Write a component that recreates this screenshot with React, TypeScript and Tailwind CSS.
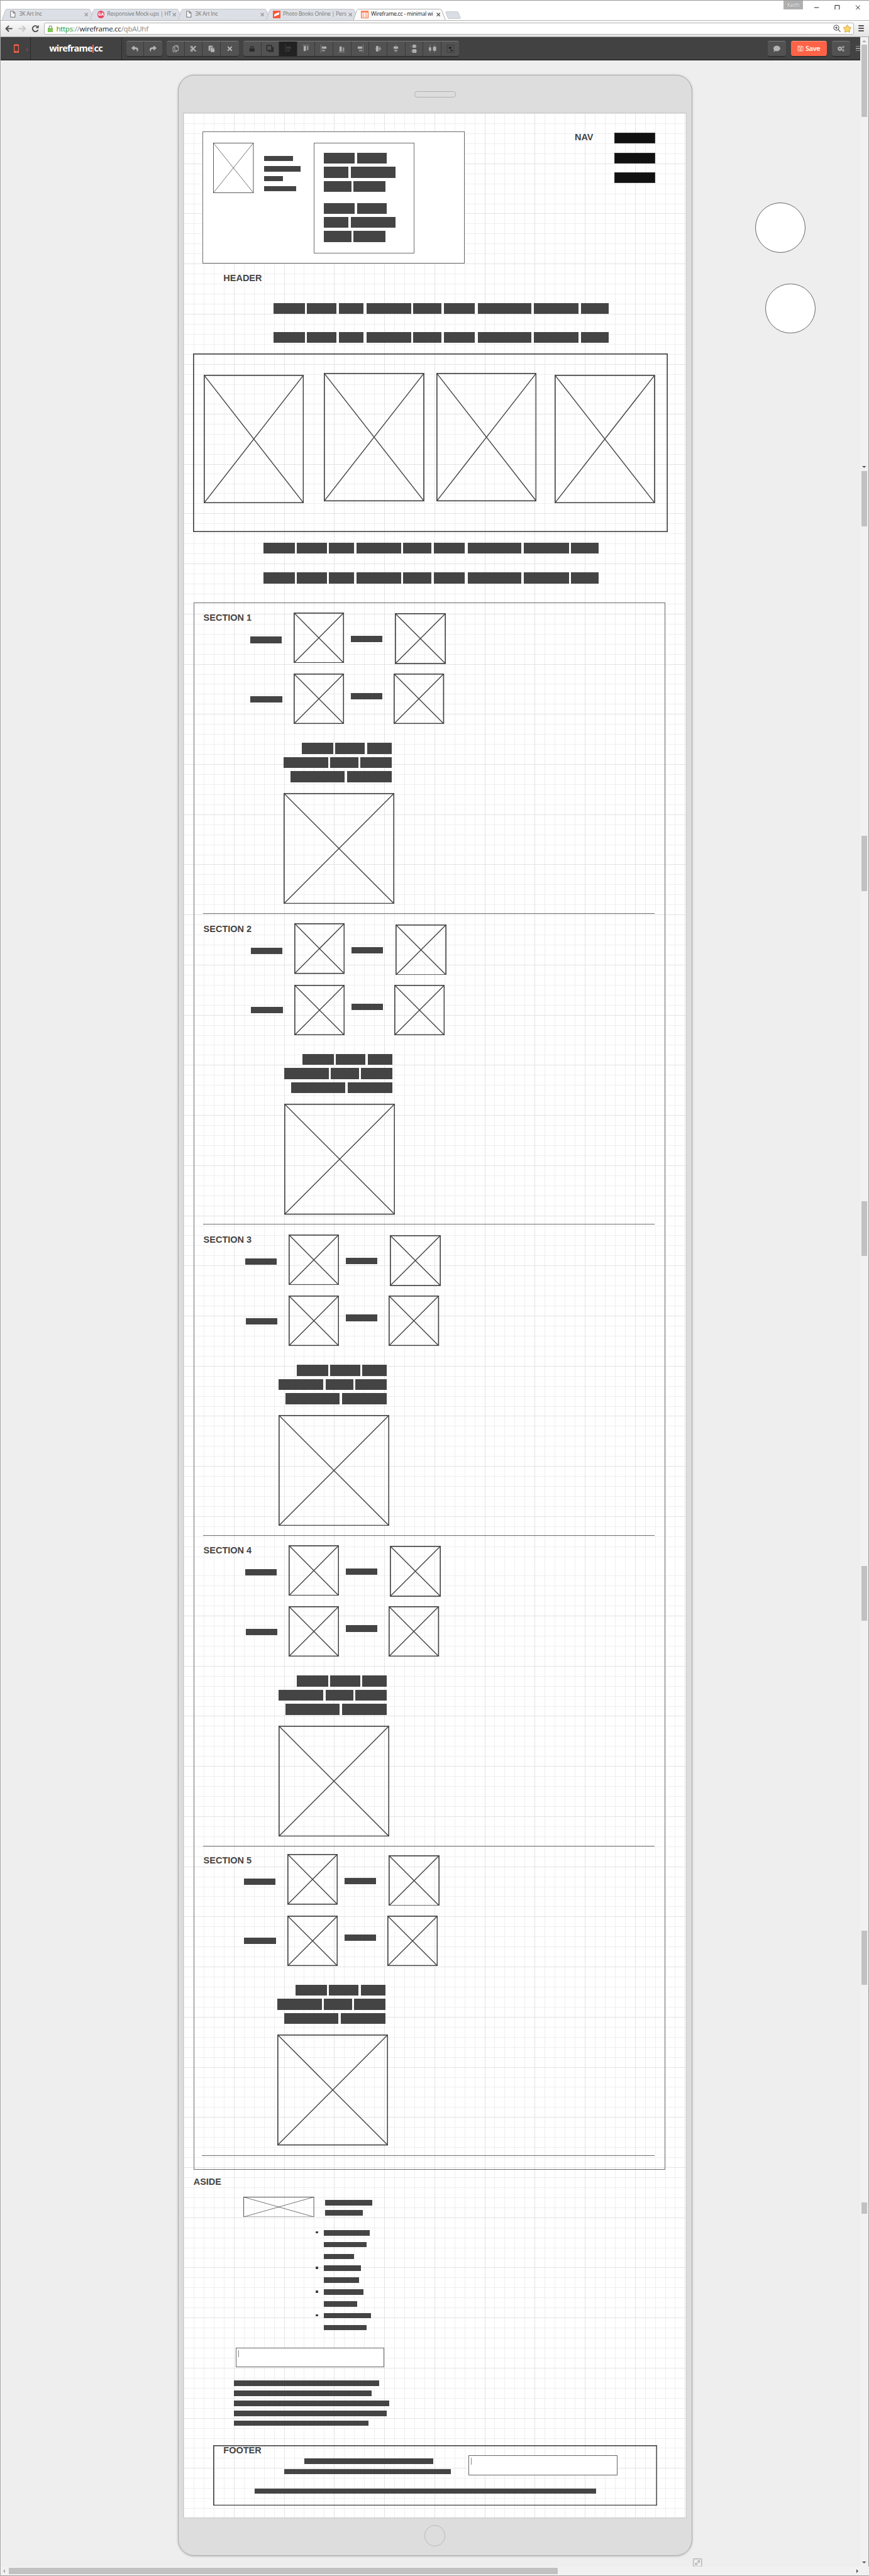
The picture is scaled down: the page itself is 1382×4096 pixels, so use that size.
import React from "react";
import {
  FaReply,
  FaShare,
  FaRegCopy,
  FaCut,
  FaPaste,
  FaTimes,
  FaLock,
  FaComment,
  FaRegSave,
  FaCogs,
  FaCaretRight,
  FaStar,
} from "react-icons/fa";

/* ---------- canvas primitives (left, top, right, bottom in page units) ---------- */

const CANVAS_TOP = 133;

type Rect = [number, number, number, number];

const place = ([l, t, r, b]: Rect) => ({
  left: l,
  top: t - CANVAS_TOP,
  width: r - l,
  height: b - t,
});

const Bar = ({ at }: { at: Rect }) => <div className="absolute bg-[#444]" style={place(at)} />;

const Frame = ({ at, fill }: { at: Rect; fill?: boolean }) => (
  <div className={`absolute border border-[#6c6c6c] ${fill ? "bg-white" : ""}`} style={place(at)} />
);

const HeavyFrame = ({ at }: { at: Rect }) => {
  const w = at[2] - at[0];
  const h = at[3] - at[1];
  return (
    <svg className="absolute" style={place(at)} viewBox={`0 0 ${w} ${h}`} fill="none" stroke="#444" strokeWidth="2.3">
      <rect x="1.15" y="1.15" width={w - 2.3} height={h - 2.3} />
    </svg>
  );
};

const ImageBox = ({ at, stroke = 2.3 }: { at: Rect; stroke?: number }) => {
  const w = at[2] - at[0];
  const h = at[3] - at[1];
  const s = stroke / 2;
  return (
    <svg className="absolute" style={place(at)} viewBox={`0 0 ${w} ${h}`} fill="none" stroke="#444">
      <rect x={s} y={s} width={w - stroke} height={h - stroke} strokeWidth={stroke} />
      <path d={`M${s} ${s}L${w - s} ${h - s}M${w - s} ${s}L${s} ${h - s}`} strokeWidth={stroke * 0.85} />
    </svg>
  );
};

const Label = ({ x, base, children }: { x: number; base: number; children: string }) => (
  <div
    className="absolute whitespace-nowrap font-['Liberation_Sans',Arial,sans-serif] text-[20px] leading-[20px] font-bold text-[#444]"
    style={{ left: x, top: base - 17.3 - CANVAS_TOP }}
  >
    {children}
  </div>
);

const Input = ({ at }: { at: Rect }) => (
  <div className="absolute border border-[#666] bg-white pt-[4px] pl-[5px]" style={place(at)}>
    <div className="h-[16px] w-[1.4px] bg-[#888]" />
  </div>
);

/* ---------- canvas content ---------- */

const paragraphWords: [number, number][] = [
  [599.7, 669.3],
  [673.7, 738.8],
  [744, 798],
  [803.9, 902.3],
  [906.7, 968.1],
  [974, 1042.1],
  [1048, 1165.7],
  [1170.8, 1270],
  [1275.2, 1335.8],
];

const WordRow = ({ dx, y, h }: { dx: number; y: number; h: number }) => (
  <>
    {paragraphWords.map(([a, b]) => (
      <Bar key={a} at={[a + dx, y, b + dx, y + h]} />
    ))}
  </>
);

const sectionImages: Rect[] = [
  [644.1, 1343.5, 754.7, 1454.7],
  [866.2, 1345.4, 978, 1457],
  [644.1, 1478, 754.7, 1588.7],
  [864.1, 1478, 974.8, 1588.7],
  [622, 1739.8, 865, 1983.2],
];

const sectionBars: Rect[] = [
  [549, 1396.8, 618, 1411],
  [769.8, 1395, 839.2, 1409.2],
  [549.8, 1527.2, 619.2, 1541],
  [769.8, 1519.9, 839.2, 1534],
  [662.1, 1630, 731, 1654],
  [736, 1630, 800.9, 1654],
  [806.2, 1630, 860, 1654],
  [622, 1660.8, 720, 1685.2],
  [725, 1660.8, 786.2, 1685.2],
  [791, 1660.8, 860, 1685.2],
  [638, 1692, 756, 1716],
  [762, 1692, 860, 1716],
];

const sections = [
  { name: "SECTION 1", dx: 0, dy: 0, base: 1361.9, line: 2004.3, lineX: 446 },
  { name: "SECTION 2", dx: 1, dy: 682.2, base: 2045.1, line: 2686.2, lineX: 446 },
  { name: "SECTION 3", dx: -11, dy: 1364.2, base: 2727.3, line: 3368.3, lineX: 446 },
  { name: "SECTION 4", dx: -11, dy: 2045.8, base: 3408.2, line: 4049.6, lineX: 446 },
  { name: "SECTION 5", dx: -14, dy: 2724.1, base: 4089.4, line: 4728.3, lineX: 443 },
];

const shift = (r: Rect, dx: number, dy: number): Rect => [r[0] + dx, r[1] + dy, r[2] + dx, r[3] + dy];

const headerBars: Rect[] = [
  [579.7, 342, 643.4, 353.9],
  [579.7, 364.2, 659.6, 376],
  [579.7, 386, 621.2, 397.8],
  [579.7, 408, 650, 420],
  ...[0, 110].flatMap((dy): Rect[] => [
    [710, 335 + dy, 778.8, 359 + dy],
    [784, 335 + dy, 849, 359 + dy],
    [710, 366.2 + dy, 764, 389.9 + dy],
    [769.9, 366.2 + dy, 868.3, 389.9 + dy],
    [710, 397 + dy, 771.4, 421 + dy],
    [775.8, 397 + dy, 845.3, 421 + dy],
  ]),
];

const asideList = [811.3, 803.9, 777.3, 791.3, 788.4, 797.2, 783.9, 814.3, 803.9];
const asideText = [832, 815.7, 854.2, 848.3, 808.3];
const bullets = [0, 3, 5, 7];

const Wireframe = () => (
  <>
    <Frame at={[444.4, 289, 1019.2, 577.7]} fill />
    <ImageBox at={[468, 313.2, 556.8, 423.5]} stroke={1.2} />
    <Frame at={[687.8, 313.2, 909, 555.6]} />
    {headerBars.map((r, i) => (
      <Bar key={i} at={r} />
    ))}

    <Label x={1261} base={308.8}>NAV</Label>
    {[290.6, 334.6, 378.4].map((y) => (
      <div key={y} className="absolute border border-[#333] bg-[#111]" style={place([1347.7, y, 1437.2, y + 23.5])} />
    ))}

    <Label x={490.2} base={616.8}>HEADER</Label>
    <WordRow dx={0} y={665.1} h={23.7} />
    <WordRow dx={0} y={728} h={24} />

    <HeavyFrame at={[423.6, 774.8, 1465.3, 1166.7]} />
    <ImageBox at={[447.3, 821.9, 667, 1103.6]} />
    <ImageBox at={[710.7, 818.8, 931.2, 1100.5]} />
    <ImageBox at={[957, 818.8, 1176.8, 1100.5]} />
    <ImageBox at={[1216.7, 821.9, 1437.2, 1103.6]} />

    <WordRow dx={-21.8} y={1190} h={24} />
    <WordRow dx={-21.8} y={1255.9} h={24} />

    <Frame at={[424.9, 1321.5, 1459.4, 4759.7]} />
    {sections.map((s) => (
      <React.Fragment key={s.name}>
        <Label x={446.5} base={s.base}>{s.name}</Label>
        {sectionImages.map((r, i) => (
          <ImageBox key={i} at={shift(r, s.dx, s.dy)} />
        ))}
        {sectionBars.map((r, i) => (
          <Bar key={i} at={shift(r, s.dx, s.dy)} />
        ))}
        <div className="absolute h-[1.4px] bg-[#6c6c6c]" style={{ left: s.lineX, top: s.line - 0.7 - CANVAS_TOP, width: 1436 - s.lineX }} />
      </React.Fragment>
    ))}

    <Label x={424.5} base={4793.2}>ASIDE</Label>
    <ImageBox at={[533.9, 4819, 689.2, 4863.8]} stroke={1.2} />
    <Bar at={[712.9, 4826, 817.2, 4838.2]} />
    <Bar at={[712.9, 4848, 795.8, 4860.3]} />
    {bullets.map((i) => (
      <Bar key={i} at={[692.9, 4895.1 + i * 26, 698.1, 4899.9 + i * 26]} />
    ))}
    {asideList.map((r, i) => (
      <Bar key={i} at={[710, 4892.2 + i * 26, r, 4904.2 + i * 26]} />
    ))}
    <Input at={[516.9, 5150.2, 843.1, 5193.8]} />
    {asideText.map((r, i) => (
      <Bar key={i} at={[513.9, 5222.2 + i * 21.97, r, 5234.2 + i * 21.97]} />
    ))}

    <HeavyFrame at={[468, 5364, 1442.4, 5497]} />
    <Label x={490.2} base={5382.6}>FOOTER</Label>
    <Bar at={[667.8, 5393, 951.1, 5405.2]} />
    <Bar at={[624.1, 5416.3, 988.9, 5428.2]} />
    <Bar at={[558.3, 5459.3, 1307.7, 5471]} />
    <Input at={[1027.3, 5386, 1354.3, 5430.2]} />

    {([[1657.3, 444.9, 1766.9, 554.6], [1679.6, 621.9, 1789.7, 731.6]] as Rect[]).map((r) => (
      <div key={r[0]} className="absolute rounded-full border border-[#666] bg-white" style={place(r)} />
    ))}

    <svg className="absolute" style={place([1521, 5612, 1541, 5631])} viewBox="0 0 20 19" fill="none" stroke="#b5b5b5" strokeWidth="1.8">
      <rect x="1" y="1" width="18" height="17" rx="1.5" />
      <path d="M6 13.500 14 5.500M10 5h4.500v4.500M5.500 9.500V14H10" />
    </svg>
  </>
);

/* ---------- grid paper of the device screen ---------- */

const lines = (dir: string, color: string, start: number, step: number) =>
  `repeating-linear-gradient(${dir}, ${color} ${start}px ${start + 1.38}px, transparent ${start + 1.38}px ${start + step}px)`;

const gridImage = (phase: number) =>
  [
    lines("to right", "#e3e3e3", 0.2, 110),
    lines("to bottom", "#e3e3e3", phase, 110),
    lines("to right", "#efefef", 0.2, 22),
    lines("to bottom", "#efefef", phase, 22),
  ].join(",");

const bands = [
  { height: 787, phase: 0 },
  { height: 2400, phase: 90.2 },
  { height: 2087, phase: 109 },
];

const Device = () => (
  <div className="mt-[31px] ml-[390px] flex h-[5443px] w-[1129px] flex-col items-center rounded-[36px] border border-[#aaa] bg-[#ddd] shadow-[0_1px_5px_rgba(0,0,0,0.2)]">
    <div className="flex h-[82px] w-full items-center justify-center">
      <div className="h-[14px] w-[91px] rounded-[6px] border border-[#b0b0b0]" />
    </div>
    <div className="w-[1105px] overflow-hidden border border-[#c8c8c8] bg-white">
      {bands.map((b) => (
        <div key={b.height} style={{ height: b.height, backgroundImage: gridImage(b.phase) }} />
      ))}
    </div>
    <div className="mt-[16px] size-[46px] rounded-full border border-[#b8b8b8]" />
  </div>
);

/* ---------- browser chrome ---------- */

const Tab = ({ title, icon, active }: { title: string; icon: React.ReactNode; active?: boolean }) => (
  <div className={`relative -mr-[9px] flex h-[25px] w-[202px] shrink-0 items-center pr-[10px] pl-[16px] ${active ? "z-10" : ""}`}>
    <svg className="absolute inset-0 size-full" viewBox="0 0 202 25" preserveAspectRatio="none">
      <path
        d="M0 25 L7.500 3.500 Q8.500 .7 11.500 .7 H190 Q193 .7 194 3.500 L202 25"
        fill={active ? "#fbfbfb" : "#dce0e6"}
        stroke={active ? "#a5a5a5" : "#b9bcc0"}
        strokeWidth="1.2"
      />
    </svg>
    <div className="relative flex size-[17px] items-center justify-center">{icon}</div>
    <div
      className={`relative ml-[5px] w-[140px] whitespace-nowrap text-[12px] leading-[18px] tracking-[-0.35px] ${active ? "text-[#222]" : "text-[#777]"}`}
    >
      {title}
    </div>
    <svg className="relative ml-[3px] size-[9px]" viewBox="0 0 9 9" stroke={active ? "#555" : "#999"} strokeWidth="1.8">
      <path d="M.8.8 8.200 8.200M8.200.8.8 8.200" />
    </svg>
  </div>
);

const PageIcon = () => (
  <svg className="h-[15px] w-[12px]" viewBox="0 0 12 15" fill="#f4f5f6" stroke="#777" strokeWidth="1.4">
    <path d="M1 1h6l4 4v9H1zM7 1v4h4" />
  </svg>
);

const BadgeIcon = () => (
  <div className="flex size-[16px] items-center justify-center rounded-full bg-[#e84566] text-[9px] leading-none font-bold text-white">
    GA
  </div>
);

const BookIcon = () => (
  <svg className="size-[17px]" viewBox="0 0 17 17">
    <path fill="#fb5638" d="M0 0h17v17H0z" />
    <path fill="#fff" d="M3 13V8l6-3v5zM8 11V6l6-3v5z" />
  </svg>
);

const WireIcon = () => (
  <svg className="size-[17px]" viewBox="0 0 17 17">
    <path fill="#fff" stroke="#fb5a28" strokeWidth="1.5" d="M1 1h15v15H1z" />
    <path stroke="#fb5a28" strokeWidth="2" d="M1 3h15" />
    <path stroke="#fb8a68" strokeWidth="1.6" d="M3 7h4M9 7h5M3 10h4M9 10h5M3 13h4M9 13h5" />
  </svg>
);

const TitleBar = () => (
  <div className="flex h-[44px] items-end border-t border-[#999] bg-white">
    <div className="ml-[4px] flex">
      <Tab title="3K Art Inc" icon={<PageIcon />} />
      <Tab title="Responsive Mock-ups | HT" icon={<BadgeIcon />} />
      <Tab title="3K Art Inc" icon={<PageIcon />} />
      <Tab title="Photo Books Online | Pers" icon={<BookIcon />} />
      <Tab title="Wireframe.cc - minimal wi" icon={<WireIcon />} active />
    </div>
    <div className="mb-[3px] ml-[11px] h-[16px] w-[29px] skew-x-[20deg] rounded-[3px] border border-[#c8ccd2] bg-[#d9dde4]" />
    <div className="ml-auto flex h-full items-start">
      <div className="h-[20px] w-[43px] bg-[#b0b0b0] text-center text-[12px] leading-[20px] tracking-[-0.3px] text-white [text-shadow:0_0_2px_#555]">
        Keith
      </div>
      <svg className="mt-[9px] mr-[19px] ml-[25px] h-[11px] w-[101px]" viewBox="0 0 101 11" fill="none" stroke="#000" strokeWidth="1.2">
        <path d="M0 5.500H10M45.500.7H55v9.500H45.500zM91 .7 100.500 10.300M100.500.7 91 10.300" />
      </svg>
    </div>
  </div>
);

const AddressBar = () => (
  <div className="flex h-[37px] items-center border-t border-b border-t-[#b5b5b5] border-b-[#aaa] bg-linear-to-b from-[#fafafa] to-[#e4e4e4]">
    <svg className="ml-[11px] h-[18px] w-[76px]" viewBox="0 0 76 18" fill="none" strokeWidth="2.600">
      <path stroke="#505050" d="M16 9H2.500M8.500 2.500 2 9l6.500 6.500" />
      <path stroke="#c6c6c6" d="M30 9h13.500M38 2.500 44.500 9 38 15.500" />
      <path stroke="#505050" d="M72.500 11.500A6.300 6.300 0 1 1 70.500 4.200" />
      <path fill="#505050" d="M74 1v7h-7z" />
    </svg>
    <div className="ml-[9px] flex h-[27px] w-[1777px] items-center rounded-[3px] border border-[#b5b5b5] bg-white pr-[4px]">
      <svg className="ml-[7px] h-[16px] w-[12px]" viewBox="0 0 12 16">
        <path d="M3 8V4.500a3 3 0 0 1 6 0V8" fill="none" stroke="#8a9a80" strokeWidth="1.600" />
        <rect x=".6" y="7" width="10.800" height="8.400" fill="#7fce50" stroke="#5aa336" />
      </svg>
      <div className="ml-[7px] text-[16px] leading-[24px] tracking-[-0.4px] text-[#888]">
        <span className="text-[#1a9a1a]">https</span>://<span className="text-[#222]">wireframe.cc</span>/qbAUhf
      </div>
      <svg className="ml-auto size-[17px]" viewBox="0 0 17 17" fill="none" stroke="#555" strokeWidth="1.600">
        <circle cx="7" cy="7" r="5.600" />
        <path d="M7 4.300v5.400M4.300 7h5.400M11 11l5 5" />
      </svg>
      <FaStar className="ml-[4px] size-[18px] fill-[#fbd868] stroke-[#c79433] [stroke-width:40]" />
    </div>
    <div className="ml-[10px] flex flex-col gap-[2.500px]">
      <div className="h-[3px] w-[13px] rounded bg-[#505050]" />
      <div className="h-[3px] w-[13px] rounded bg-[#505050]" />
      <div className="h-[3px] w-[13px] rounded bg-[#505050]" />
    </div>
  </div>
);

const Glyph = ({ children }: { children: React.ReactNode }) => (
  <svg className="size-[18px]" viewBox="0 0 18 18" fill="#b0b0b0" stroke="none">
    {children}
  </svg>
);

const dots = { stroke: "#b0b0b0", strokeWidth: 1.2, strokeDasharray: "1.4 1.2", fill: "none" };

const AlignTop = () => (
  <Glyph><path d="M2 1H16" {...dots} /><path d="M4 3h5v11H4z" /><path opacity=".7" d="M11 3h3.500v9H11z" /></Glyph>
);
const AlignLeft = () => (
  <Glyph><path d="M2 0V18" {...dots} /><path d="M4 4h10v5H4z" /><path opacity=".7" d="M4 11.500h7v3H4z" /></Glyph>
);
const AlignBottom = () => (
  <Glyph><path d="M2 17H16" {...dots} /><path d="M4 4h5v11H4z" /><path opacity=".7" d="M11 6h3.500v9H11z" /></Glyph>
);
const AlignRight = () => (
  <Glyph><path d="M16 0V18" {...dots} /><path d="M4 4h10v5H4z" /><path opacity=".7" d="M7 11.500h7v3H7z" /></Glyph>
);
const AlignMiddle = () => (
  <Glyph><path d="M2 9H16" {...dots} /><path d="M4 3h5.500v12H4z" /><path opacity=".7" d="M11 5h3v8H11z" /></Glyph>
);
const AlignCenter = () => (
  <Glyph><path d="M9 0V18" {...dots} /><path d="M4 4h10v5H4z" /><path opacity=".7" d="M5.500 11.500h7v3H5.500z" /></Glyph>
);
const SpreadY = () => (
  <Glyph><path d="M1 4H17M1 14H17" {...dots} /><path d="M6 0h7v7H6zM5 10h9v9H5z" /></Glyph>
);
const SpreadX = () => (
  <Glyph><path d="M4 0V18M14 0V18" {...dots} /><path d="M1.500 6h5v7h-5zM10.500 4.500h7V13.500h-7z" /></Glyph>
);
const GroupIcon = () => (
  <Glyph>
    <path d="M1.500 1H16.500V17H1.500z" fill="none" stroke="#222" strokeWidth="1.200" strokeDasharray="1.400 1.200" />
    <path fill="#222" d="M5 5h6v4H5zM9 11h4v3H9z" />
  </Glyph>
);
const LayersIcon = () => (
  <Glyph>
    <path fill="#222" d="M5 16V14h9V5h2.500v11z" />
    <path fill="none" stroke="#222" strokeWidth="1.600" d="M2 1.500h10v11H2z" />
  </Glyph>
);
const DimAlign = () => (
  <Glyph><path d="M3 0V18" {...dots} opacity=".4" /><path fill="#3c3c3c" d="M5 4h10v5H5zM5 11.500h7v3H5z" /></Glyph>
);

const Group = ({ items, className }: { items: React.ReactNode[]; className: string }) => (
  <div className={`flex h-[34px] rounded-[5px] border-t border-[#7a7a7a] bg-[#525252] shadow-[0_2px_0_#2c2c2c] ${className}`}>
    {items.map((icon, i) => (
      <div
        key={i}
        className="flex w-[39.5px] items-center justify-center border-r border-[#3a3a3a] text-[15px] text-[#b4b4b4] last:border-r-0"
      >
        {icon}
      </div>
    ))}
  </div>
);

const AppBar = () => (
  <div className="mr-[19px] ml-[2px] flex h-[52px] items-center overflow-hidden border-b-2 border-[#151111] bg-[#424242]">
    <div className="flex h-full w-[65px] items-center border-r border-[#2b2b2b]">
      <svg className="ml-[28px] h-[20px] w-[12px]" viewBox="0 0 12 20">
        <rect width="12" height="20" rx="2" fill="#ff6347" />
        <path fill="#424242" d="M1.800 3.500h8.400v12H1.800z" />
        <circle cx="6" cy="17.600" r="1.100" fill="#424242" />
      </svg>
      <FaCaretRight className="mt-[4px] ml-[14px] size-[11px] text-[#8a4a3e]" />
    </div>
    <div className="flex h-full w-[200px] items-center justify-center border-r border-[#2b2b2b] font-['Open_Sans',sans-serif] text-[20px] font-bold tracking-[-1.1px] text-white">
      <span>wireframe</span>
      <span className="mx-[1px] h-[18px] w-[2px] bg-[#ff6347]" />
      <span>cc</span>
    </div>
    <Group className="ml-[10px]" items={[<FaReply />, <FaShare />]} />
    <Group className="ml-[10px]" items={[<FaRegCopy />, <FaCut />, <FaPaste />, <FaTimes />]} />
    <div className="ml-[10px] flex h-[34px] rounded-[5px] border-t border-[#7a7a7a] bg-[#525252] shadow-[0_2px_0_#2c2c2c]">
      {[
        <FaLock className="text-[#2a2a2a]" size={13} />,
        <LayersIcon />,
        <DimAlign />,
        <AlignTop />,
        <AlignLeft />,
        <AlignBottom />,
        <AlignRight />,
        <AlignMiddle />,
        <AlignCenter />,
        <SpreadY />,
        <SpreadX />,
        <GroupIcon />,
      ].map((icon, i) => (
        <div
          key={i}
          className={`flex w-[39.5px] items-center justify-center border-r border-[#3a3a3a] last:border-r-0 ${i === 2 ? "bg-[#222]" : ""}`}
        >
          {icon}
        </div>
      ))}
    </div>
    <div className="ml-auto flex items-center">
      <Group className="" items={[<FaComment />]} />
      <div className="ml-[11px] flex h-[34px] w-[79px] items-center rounded-[5px] border-t border-[#ff9480] bg-[#ff6347] pl-[14px] text-[15px] font-bold tracking-[-0.7px] text-[#ffe8e0] shadow-[0_2px_0_#2c2c2c]">
        <FaRegSave className="mr-[4px] size-[14px]" />
        Save
      </div>
      <Group className="ml-[11px]" items={[<FaCogs />]} />
      <div className="ml-[13px] flex w-[10px] flex-col gap-[3px]">
        <div className="h-[2px] bg-[#999]" />
        <div className="h-[2px] bg-[#999]" />
        <div className="h-[2px] bg-[#999]" />
      </div>
    </div>
  </div>
);

/* ---------- scroll bars ---------- */

const thumbs: [number, number][] = [
  [98, 257],
  [1034, 1155],
  [1834, 1955],
  [2635, 2755],
  [3435, 3555],
  [4236, 4354],
  [4832, 4856],
];

const Scrollbars = () => (
  <>
    <div className="absolute top-[81px] right-0 h-[5550px] w-[19px] border-r-2 border-[#a0a0a0] bg-[#f1f1f1]">
      {thumbs.map(([a, b]) => (
        <div key={a} className="absolute left-[2px] w-[13px] bg-[#c1c1c1]" style={{ top: a - 81, height: b - a }} />
      ))}
      <svg className="absolute top-[7px] left-[4px] h-[4px] w-[9px]" viewBox="0 0 9 4"><path fill="#a3a3a3" d="M0 4 4.500 0 9 4z" /></svg>
      <svg className="absolute top-[942px] left-[4px] h-[4px] w-[9px]" viewBox="0 0 9 4"><path fill="#505050" d="M0 0 4.500 4 9 0z" /></svg>
      <svg className="absolute top-[5538px] left-[4px] h-[4px] w-[9px]" viewBox="0 0 9 4"><path fill="#505050" d="M0 0 4.500 4 9 0z" /></svg>
    </div>
    <div className="absolute bottom-0 left-0 flex h-[20px] w-full items-center border-b-2 border-[#a0a0a0] bg-[#f1f1f1]">
      <svg className="ml-[7px] h-[9px] w-[4px]" viewBox="0 0 4 9"><path fill="#a3a3a3" d="M4 0 0 4.500 4 9z" /></svg>
      <div className="ml-[9px] h-[13px] w-[1204px] bg-[#c1c1c1]" />
      <svg className="mr-[24px] ml-auto h-[9px] w-[4px]" viewBox="0 0 4 9"><path fill="#505050" d="M0 0 4 4.500 0 9z" /></svg>
    </div>
    <div className="absolute inset-y-0 left-0 w-[1.4px] bg-[#aaa]" />
  </>
);

export default function App() {
  return (
    <div className="h-[4096px] w-full overflow-hidden bg-[#eee]">
      <div className="relative h-[5651px] w-[1907px] overflow-hidden bg-[#eee] font-['Open_Sans','Noto_Sans',sans-serif] [zoom:0.7248]">
        <TitleBar />
        <AddressBar />
        <AppBar />
        <main className="relative flex">
          <Device />
          <Wireframe />
        </main>
        <Scrollbars />
      </div>
    </div>
  );
}
